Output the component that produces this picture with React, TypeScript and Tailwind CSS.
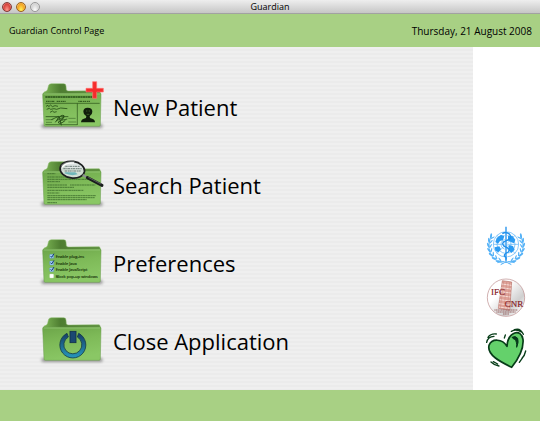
import type { ReactNode } from "react";

type FolderIconProps = {
  id: string;
  children: ReactNode;
};

type MenuItemProps = {
  label: string;
  icon: ReactNode;
};

function FolderIcon({ id, children }: FolderIconProps) {
  return (
    <svg viewBox="0 0 240 192" className="h-16 w-20 shrink-0" aria-hidden="true">
      <defs>
        <linearGradient id={`${id}-front`} x1="0" y1="0" x2="0.3" y2="1">
          <stop offset="0" stopColor="#6ca549" />
          <stop offset="0.5" stopColor="#7eba58" />
          <stop offset="1" stopColor="#8ac765" />
        </linearGradient>
        <linearGradient id={`${id}-back`} x1="0" y1="0" x2="1" y2="0">
          <stop offset="0" stopColor="#7db655" />
          <stop offset="0.3" stopColor="#4e7d31" />
          <stop offset="1" stopColor="#5d903e" />
        </linearGradient>
        <filter id={`${id}-shadow`} x="-20%" y="-150%" width="140%" height="400%">
          <feGaussianBlur stdDeviation="4" />
        </filter>
      </defs>
      <rect x="34" y="147" width="184" height="12" rx="6" fill="#555" opacity="0.6" filter={`url(#${id}-shadow)`} />
      <path
        d="M40 62 L41 54 Q42 50 48 49 Q53 47 55 34 Q56 26 64 26 L101 26 Q108 26 108 33 L109 44 Q110 48 116 48 L207 47 Q211 48 211 54 L211 70 L40 70 Z"
        fill={`url(#${id}-back)`}
        stroke="#8fbf70"
        strokeWidth="1.5"
      />
      <path
        d="M38 58 Q38 54 43 54 L106 55 L209 54 Q213 54 213 58 L211 150 Q211 154 207 154 L46 154 Q42 154 42 150 Z"
        fill={`url(#${id}-front)`}
        stroke="#67984b"
        strokeWidth="1.5"
      />
      <path d="M41 57 H210" stroke="#9fce7f" strokeWidth="2" />
      {children}
    </svg>
  );
}

function NewPatientIcon() {
  return (
    <FolderIcon id="new">
      <g fill="none" stroke="#274f17">
        <path d="M46 66 H188" strokeWidth="4" strokeDasharray="5 1 8 1" />
        <path d="M48 79 H75 M80 79 H108 M145 79 H180" strokeWidth="3" strokeDasharray="4 1 6 2" />
        <path d="M46 85 H209" strokeWidth="2" />
        <path d="M142 85 V150 M46 149 H142" strokeWidth="2" />
        <path
          d="M48 94 l6 -3 2 4 6 -5 5 5 8 -3 9 2 M50 103 l8 -3 4 3 10 -2 8 2 12 -4 20 2 M60 112 l8 -4 4 4 8 -2 M47 125 H115 M64 134 l22 -10 -4 12 20 -10 -8 10 18 -4"
          strokeWidth="2.5"
        />
        <path d="M76 142 Q92 116 102 122 Q104 130 84 142 Q90 150 106 136 M88 126 L94 151" strokeWidth="3" />
        <path d="M47 134 H70 M48 142 H66 M115 130 H137 M115 141 H139" strokeWidth="1.5" />
      </g>
      <path d="M153 142 Q153 132 168 129 L169 124 Q160 119 160 110 Q160 98 173 98 Q187 98 187 110 Q187 119 179 124 L180 129 Q195 132 195 142 Z" fill="#101f0b" />
      <path d="M168 108 h4 M176 108 h4 M170 118 h8" stroke="#4b7834" strokeWidth="2" />
      <path d="M188 20 H200 V40 H220 V51 H200 V70 H188 V51 H168 V40 H188 Z" fill="#f52c2c" stroke="#ff7370" strokeWidth="2" />
    </FolderIcon>
  );
}

function SearchPatientIcon() {
  return (
    <FolderIcon id="search">
      <g fill="none" stroke="#3d6d2d" strokeWidth="2.5">
        <path d="M52 62 H76" strokeDasharray="6 1" />
        <path d="M52 72 H108 M52 79 H178 M52 86 H90" strokeDasharray="7 1 4 1" />
        <path d="M52 96 H112 M120 96 H196 M52 103 H132" strokeDasharray="5 1 8 1" />
        <path d="M52 112 H160 M52 120 H88" strokeDasharray="7 1 4 1" />
        <path d="M52 128 H198 M52 134 H194 M52 140 H170 M52 149 H82" strokeDasharray="8 1 5 1" />
      </g>
      <ellipse cx="127" cy="50" rx="37" ry="25" fill="#d9e2df" fillOpacity="0.92" stroke="#1d2020" strokeWidth="5" transform="rotate(8 127 50)" />
      <path d="M106 40 H150 M100 47 H156 M104 54 H152" stroke="#70807c" strokeWidth="3" strokeDasharray="7 2 4 1" />
      <path d="M103 61 Q124 70 143 64 L136 58 H105 Z" fill="#70b6b8" />
      <path d="M96 43 Q108 28 132 30" fill="none" stroke="#fff" strokeWidth="4" />
      <path d="M93 38 Q108 24 134 26" fill="none" stroke="#8a908e" strokeWidth="2" />
      <path d="M158 66 L175 75" stroke="#8c9190" strokeWidth="6" />
      <path d="M172 74 L216 97" stroke="#1a1d1d" strokeWidth="9" strokeLinecap="round" />
      <path d="M175 73 L213 93" stroke="#788080" strokeWidth="2" />
    </FolderIcon>
  );
}

const browserOptions = [
  { label: "Enable plug-ins", y: 77, checked: true },
  { label: "Enable Java", y: 97, checked: true },
  { label: "Enable JavaScript", y: 117, checked: true },
  { label: "Block pop-up windows", y: 136, checked: false },
];

function PreferencesIcon() {
  return (
    <FolderIcon id="prefs">
      {browserOptions.map((option) => (
        <g key={option.label}>
          <rect x="59" y={option.y - 7} width="12" height="12" rx="2" fill={option.checked ? "#a5cff7" : "#fff"} stroke={option.checked ? "#4380ba" : "#c7dcbc"} />
          {option.checked ? (
            <path d={`M62 ${option.y - 2} l3 4 l7 -11`} fill="none" stroke="#143a78" strokeWidth="3" />
          ) : null}
          <text x="77" y={option.y + 4} fontSize="12" fill="#173209" stroke="#173209" strokeWidth="0.4">
            {option.label}
          </text>
        </g>
      ))}
    </FolderIcon>
  );
}

function CloseIcon() {
  return (
    <FolderIcon id="close">
      <defs>
        <linearGradient id="power" x1="0" y1="0" x2="0" y2="1">
          <stop offset="0" stopColor="#173d66" />
          <stop offset="1" stopColor="#2798bd" />
        </linearGradient>
      </defs>
      <path
        d="M111 73 A39 39 0 1 0 146 73 L142 84 A27 27 0 1 1 115 84 Z"
        fill="url(#power)"
        stroke="#153d48"
        strokeWidth="2.5"
        strokeLinejoin="round"
      />
      <rect x="120" y="67" width="18" height="34" fill="#1b4872" stroke="#102f4a" strokeWidth="2.5" />
    </FolderIcon>
  );
}

function MenuItem({ label, icon }: MenuItemProps) {
  return (
    <li>
      <button type="button" className="flex h-[78px] items-center gap-[3px] text-left">
        {icon}
        <span className="text-[22px] leading-7">{label}</span>
      </button>
    </li>
  );
}

const laurelLeaves = [0, 1, 2, 3, 4, 5, 6];

function WhoLogo() {
  return (
    <svg viewBox="27 12 132 132" className="size-11" role="img" aria-label="World Health Organization">
      <g fill="none" stroke="#4fadf6" strokeWidth="2">
        <circle cx="93" cy="73" r="38" />
        <circle cx="93" cy="73" r="27" />
        <circle cx="93" cy="73" r="15" />
        <path d="M55 73 H131 M93 35 V111 M66 46 L120 100 M66 100 L120 46" />
      </g>
      <g fill="#2b9bf2">
        <path d="M65 54 L78 44 L88 49 L84 60 L75 63 L69 71 L61 66 Z" />
        <path d="M99 48 L112 47 L121 59 L117 70 L107 66 L99 60 Z" />
        <path d="M59 82 L73 79 L78 88 L70 97 L61 92 Z" />
        <path d="M101 75 L114 78 L119 89 L109 99 L101 91 Z" />
      </g>
      <g fill="#55b2f7">
        {[1, -1].map((side) => (
          <g key={side} transform={`translate(93 76) scale(${side} 1)`}>
            <path d="M8 54 Q48 46 51 6 Q52 -12 43 -28" fill="none" stroke="#55b2f7" strokeWidth="2" />
            {laurelLeaves.map((leaf) => (
              <g key={leaf} transform={`rotate(${leaf * 16 - 32})`}>
                <ellipse cx="53" cy="0" rx="3" ry="8" transform="rotate(22 53 0)" />
                <ellipse cx="46" cy="2" rx="2" ry="7" transform="rotate(-28 46 2)" />
              </g>
            ))}
          </g>
        ))}
        <path d="M67 128 Q86 119 109 134 M119 128 Q100 119 77 134" fill="none" stroke="#55b2f7" strokeWidth="3" />
      </g>
      <path d="M93 20 V125" stroke="#fff" strokeWidth="8" />
      <path d="M93 20 V125" stroke="#2090ec" strokeWidth="4" />
      <path
        d="M82 41 Q94 33 104 43 Q113 56 94 62 Q76 68 88 79 Q108 86 100 96 Q85 102 89 109 Q96 113 92 119"
        fill="none"
        stroke="#2090ec"
        strokeWidth="4"
      />
    </svg>
  );
}

function IfcLogo() {
  return (
    <svg viewBox="27 15 132 132" className="size-11" role="img" aria-label="IFC CNR">
      <defs>
        <linearGradient id="ifc-shade" x1="0" y1="0" x2="1" y2="1">
          <stop offset="0.35" stopColor="#fff" />
          <stop offset="0.7" stopColor="#cfcfcf" />
          <stop offset="0.9" stopColor="#fff" />
        </linearGradient>
      </defs>
      <circle cx="93" cy="80" r="56" fill="url(#ifc-shade)" stroke="#b98a8a" strokeWidth="2" />
      <path d="M82 29 L110 33 L104 118 L70 112 Z" fill="#e0a399" stroke="#b56f67" strokeWidth="2" />
      <path
        d="M80 39 L109 43 M79 50 L108 54 M77 62 L107 66 M75 74 L106 78 M74 86 L105 90 M72 98 L104 102 M71 108 L104 112"
        stroke="#f6dcd6"
        strokeWidth="3"
      />
      <path d="M86 32 L76 112 M95 33 L87 114 M104 34 L97 116" stroke="#b9756c" strokeWidth="1" />
      <g fill="#85191f" stroke="#85191f" strokeWidth="0.5" className="font-['Liberation_Serif',serif]">
        <text x="48" y="73" fontSize="27">IFC</text>
        <text x="89" y="107" fontSize="27">CNR</text>
      </g>
      <path d="M58 117 H128 M64 123 H122 M84 129 H102" stroke="#9a6564" strokeWidth="3" strokeDasharray="4 1" />
    </svg>
  );
}

function HeartLogo() {
  return (
    <svg viewBox="27 18 132 132" className="size-11" role="img" aria-label="Heart">
      <path
        d="M96 73 C82 49 50 49 42 70 C35 100 80 121 110 136 C125 117 147 83 144 52 C139 19 99 27 96 73 Z"
        fill="#64d16b"
        stroke="#073c18"
        strokeWidth="5"
        strokeLinejoin="round"
      />
      <path d="M111 46 Q122 40 128 49 Q132 60 125 76 Q126 57 119 52 Q113 50 111 46 Z" fill="#06391a" stroke="#06391a" strokeWidth="3" />
      <g fill="none" stroke="#073c18" strokeWidth="4" strokeLinecap="round">
        <path d="M35 61 Q38 44 57 43 M39 46 Q47 34 64 36 M88 48 L91 39 M109 28 Q124 20 139 30 M118 23 Q136 16 145 37 M152 87 Q149 101 141 109 M143 107 L133 121 M48 120 Q58 130 72 132 M55 119 L68 126" />
      </g>
    </svg>
  );
}

function TitleBar() {
  return (
    <div className="relative flex h-[14px] items-center justify-center border-b border-[#a2a2a2] bg-linear-to-b from-[#eeeeee] to-[#c6c6c6]">
      <div className="absolute left-[2px] flex gap-[4px]">
        <button type="button" aria-label="Close window" className="size-[10px] rounded-full border border-[#833c38] bg-[radial-gradient(ellipse_at_50%_90%,#ff9d91,#d7423b_60%,#f6d2cf)]" />
        <button type="button" aria-label="Minimize window" className="size-[10px] rounded-full border border-[#98631f] bg-[radial-gradient(ellipse_at_50%_90%,#fff75f,#f4a422_60%,#fbe7c1)]" />
        <button type="button" aria-label="Zoom window" className="size-[10px] rounded-full border border-[#999999] bg-[radial-gradient(ellipse_at_50%_90%,#ffffff,#d4d4d4_60%,#f2f2f2)]" />
      </div>
      <span className="text-[9px] leading-3">Guardian</span>
    </div>
  );
}

export default function App() {
  return (
    <div className="flex min-h-screen flex-col bg-white font-['Open_Sans','Noto_Sans',sans-serif] text-black">
      <TitleBar />
      <header className="flex h-[33px] items-center justify-between bg-[#a8d084] pr-2 pl-[9px]">
        <h1 className="text-[9px] leading-3">Guardian Control Page</h1>
        <time dateTime="2008-08-21" className="text-[10px] leading-3">
          Thursday, 21 August 2008
        </time>
      </header>
      <main className="flex flex-1">
        <nav className="flex-1 bg-[repeating-linear-gradient(to_bottom,#efefef_0px,#efefef_2px,#ebebeb_2px,#ebebeb_4px)] pt-[21px] pl-[30px]">
          <ul>
            <MenuItem label="New Patient" icon={<NewPatientIcon />} />
            <MenuItem label="Search Patient" icon={<SearchPatientIcon />} />
            <MenuItem label="Preferences" icon={<PreferencesIcon />} />
            <MenuItem label="Close Application" icon={<CloseIcon />} />
          </ul>
        </nav>
        <aside className="flex w-[67px] flex-col items-end justify-end gap-2 bg-white pr-3 pb-[18px]">
          <WhoLogo />
          <IfcLogo />
          <HeartLogo />
        </aside>
      </main>
      <footer className="h-[31px] bg-[#a8d084]" />
    </div>
  );
}
